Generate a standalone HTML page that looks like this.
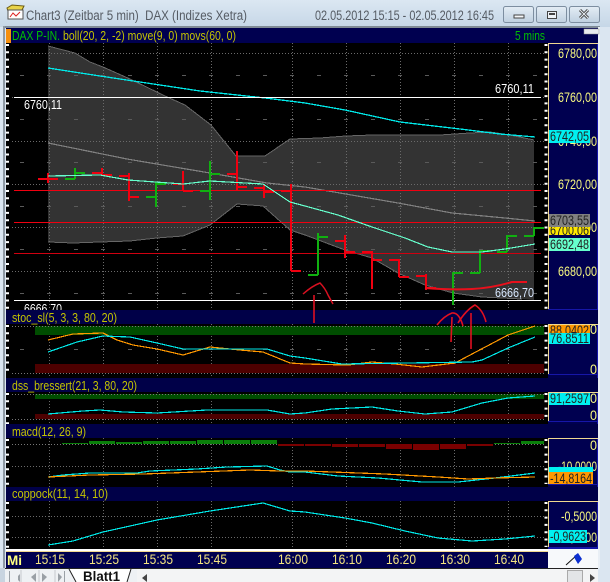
<!DOCTYPE html>
<html><head><meta charset="utf-8"><style>
html,body{margin:0;padding:0;background:#dbe6f1;overflow:hidden}
svg{display:block;position:absolute;left:0;top:0}
text{font-family:"Liberation Sans",sans-serif}
polyline{shape-rendering:crispEdges}
</style></head><body>
<svg xmlns="http://www.w3.org/2000/svg" width="610" height="582" viewBox="0 0 610 582">
<defs><linearGradient id="tb" x1="0" y1="0" x2="0" y2="1"><stop offset="0" stop-color="#dbe7f2"/><stop offset="1" stop-color="#c6d7e7"/></linearGradient>
<linearGradient id="btn" x1="0" y1="0" x2="0" y2="1"><stop offset="0" stop-color="#e4edf5"/><stop offset="1" stop-color="#bfd0e0"/></linearGradient></defs>
<rect width="610" height="582" fill="#dbe6f1"/>
<rect width="610" height="27" fill="url(#tb)"/>
<rect x="3" y="26" width="597" height="2" fill="#7f8b96"/>
<rect x="3" y="26" width="2" height="543" fill="#8f9aa5"/>
<rect x="598" y="27" width="2" height="541" fill="#e9eff5"/>
<!-- title icon -->
<g><path d="M7 8 L12 5 L24 6 L22 10 L8 11Z" fill="#e8d34a" stroke="#6a5a10" stroke-width="1"/><rect x="8" y="10" width="15" height="9" fill="#fff" stroke="#555"/><path d="M10 17 L13 13 L16 16 L20 12" fill="none" stroke="#d22" stroke-width="1"/></g>
<text x="26" y="20" font-size="13.5" fill="#555b63" textLength="221" lengthAdjust="spacingAndGlyphs" xml:space="preserve">Chart3 (Zeitbar 5 min)  DAX (Indizes Xetra)</text>
<text x="315" y="20" font-size="13.5" fill="#555b63" textLength="179" lengthAdjust="spacingAndGlyphs">02.05.2012 15:15 - 02.05.2012 16:45</text>
<!-- buttons -->
<g fill="url(#btn)" stroke="#7d8ea0"><rect x="503.500" y="6.500" width="30" height="16" rx="2"/><rect x="536.500" y="6.500" width="30" height="16" rx="2"/><rect x="569.500" y="6.500" width="30" height="16" rx="2"/></g>
<rect x="514" y="15" width="10" height="3" fill="#f4f6f8" stroke="#444"/>
<rect x="547.500" y="11.500" width="9" height="7" fill="#eef2f6" stroke="#444"/><rect x="549" y="13" width="6" height="2" fill="#444"/>
<path d="M580 10 L588 18 M588 10 L580 18" stroke="#444" stroke-width="3"/><path d="M580 10 L588 18 M588 10 L580 18" stroke="#e8eef4" stroke-width="1"/>
<!-- base black -->
<rect x="6" y="28" width="542" height="522" fill="#000"/>
<!-- right axis backgrounds -->
<rect x="548" y="28" width="50" height="522" fill="#000050"/>
<rect x="597" y="28" width="1" height="522" fill="#1616a8"/>
<!-- main chart -->
<rect x="548" y="43" width="1" height="267" fill="#f0d890"/><rect x="548" y="43" width="50" height="1" fill="#f0d890"/>
<polygon fill="#333" points="48,46 75,53 90,62 103,67 130,79 165,96 185,105 211,125 236,156 265,156 290,139 320,138 346,136 372,135 400,135 440,135 470,133 490,132 510,135 534,140 534,300 522,299 482,297 453,293 425,285 398,273 372,258 345,250 305,235 290,230 263,206 237,204 210,225 183,236 157,238 130,241 100,242 73,243 48,242"/>
<polyline fill="none" stroke="#666" points="48,46 75,53 90,62 103,67 130,79 165,96 185,105 211,125 236,156 265,156 290,139 320,138 346,136 372,135 400,135 440,135 470,133 490,132 510,135 534,140"/>
<polyline fill="none" stroke="#666" points="48,242 73,243 100,242 130,241 157,238 183,236 210,225 237,204 263,206 290,230 305,235 345,250 372,258 398,273 425,285 453,293 482,297 522,299"/>
<!-- grid -->
<g stroke="#6a6a6a" stroke-dasharray="1 2" fill="none">
<path d="M49.500 43V310M103.500 43V310M157.500 43V310M211.500 43V310M292.500 43V310M346.500 43V310M400.500 43V310M454.500 43V310M508.500 43V310"/>
<path d="M12 53.500H545M12 97.500H545M12 141.500H545M12 184.500H545M12 227.500H545M12 271.500H545"/>
<path d="M49.500 324V377M103.500 324V377M157.500 324V377M211.500 324V377M292.500 324V377M346.500 324V377M400.500 324V377M454.500 324V377M508.500 324V377"/>
<path d="M49.500 392V424M103.500 392V424M157.500 392V424M211.500 392V424M292.500 392V424M346.500 392V424M400.500 392V424M454.500 392V424M508.500 392V424"/>
<path d="M49.500 438V487M103.500 438V487M157.500 438V487M211.500 438V487M292.500 438V487M346.500 438V487M400.500 438V487M454.500 438V487M508.500 438V487"/>
<path d="M49.500 501V549M103.500 501V549M157.500 501V549M211.500 501V549M292.500 501V549M346.500 501V549M400.500 501V549M454.500 501V549M508.500 501V549"/>
<path d="M12 466.500H545M12 516.500H545M12 537.500H545"/>
</g>
<g stroke="#5a5a5a" stroke-dasharray="4 23" fill="none"><path d="M20 75.500H545M20 119.500H545M20 162.500H545M20 206.500H545M20 249.500H545M20 293.500H545M20 349.500H545"/></g>
<!-- indicator lines main -->
<polyline fill="none" stroke="#00e8e8" stroke-width="1.3" points="48,68 100,76 140,82 200,91 265,98 305,103 345,110 400,122 460,129 500,134 535,137"/>
<polyline fill="none" stroke="#808080" stroke-width="1.2" points="48,143 127,159 210,173 267,183 305,187 398,203 452,213 505,218 535,221"/>
<!-- white/red levels -->
<path d="M14 97.500H541M14 300.500H541" stroke="#fff" stroke-width="1"/>
<path d="M14 190.500H541M14 222.500H541" stroke="#f00010" stroke-width="1"/>
<path d="M14 253.500H541" stroke="#d00010" stroke-width="1"/>
<!-- bars -->
<g stroke="#f00010" stroke-width="2" fill="none">
<path d="M48 173V183M38 179H58"/>
<path d="M102 168V175M92 173H102M102 175H112"/>
<path d="M129 173V201M119 176H129M129 197H139"/>
<path d="M183 171V191M173 184H183M183 191H193"/>
<path d="M237 151V190M227 174H237M237 187H247"/>
<path d="M264 185V198M254 188H264M264 192H274"/>
<path d="M291 184V271M281 191H291M291 271H301"/>
<path d="M345 235V258M335 241H345M345 252H355"/>
<path d="M372 251V289M362 252H372M372 260H382"/>
<path d="M399 259V277M389 260H399M399 277H409"/>
<path d="M426 274V290M416 276H426M426 288H436"/>
</g>
<g stroke="#10b010" stroke-width="2" fill="none">
<path d="M75 168V179M65 179H75M75 173H85"/>
<path d="M156 182V207M146 197H156M156 184H166"/>
<path d="M210 161V200M200 191H210M210 174H220"/>
<path d="M318 233V275M308 275H318M318 237H328"/>
<path d="M453 272V305M453 273H463"/>
<path d="M480 250V273M470 273H480M480 251H490"/>
<path d="M507 235V252M497 252H507M507 236H517"/>
<path d="M534 227V236M524 236H534M534 228H544"/>
</g>
<polyline fill="none" stroke="#66ffcc" stroke-width="1.2" points="48,176 100,175 128,180 183,184 210,181 263,184 290,202 305,206 338,215 372,227 405,238 428,247 452,252 482,252 505,249 535,244"/>
<!-- hand drawing in chart -->
<path fill="none" stroke="#e8101c" stroke-width="2" d="M425 288 Q450 290 472 289 Q492 288 512 282 L527 282"/>
<path fill="none" stroke="#d81020" stroke-width="1.5" d="M303 294 Q312 286 320 283 Q325 288 328 295 L333 304"/>
<!-- text labels -->
<g font-size="13" fill="#fff">
<text x="24" y="109" textLength="38" lengthAdjust="spacingAndGlyphs">6760,11</text>
<text x="495" y="93" textLength="39" lengthAdjust="spacingAndGlyphs">6760,11</text>
<text x="495" y="297" fill="#d8e8ff" textLength="39" lengthAdjust="spacingAndGlyphs">6666,70</text>
<text x="24" y="313" textLength="38" lengthAdjust="spacingAndGlyphs">6666,70</text>
</g>
<!-- strips -->
<rect x="6" y="28" width="592" height="15" fill="#000050"/>
<rect x="6" y="29" width="5" height="14" fill="#f59010"/>
<rect x="584" y="29" width="15" height="5" fill="#e8ebee" stroke="#999" stroke-width="0.5"/>
<rect x="6" y="310" width="592" height="14" fill="#000048"/>
<rect x="6" y="378" width="592" height="14" fill="#000048"/>
<rect x="6" y="424" width="592" height="14" fill="#000048"/>
<rect x="6" y="487" width="592" height="14" fill="#000048"/>
<rect x="6" y="377" width="542" height="1" fill="#000"/>
<text x="12" y="40" font-size="13" fill="#00c000" textLength="48" lengthAdjust="spacingAndGlyphs">DAX P-IN.</text>
<text x="63" y="40" font-size="13" fill="#c4c400" textLength="173" lengthAdjust="spacingAndGlyphs">boll(20, 2, -2) move(9, 0) movs(60, 0)</text>
<text x="515" y="40" font-size="13" fill="#00c000" textLength="30" lengthAdjust="spacingAndGlyphs">5 mins</text>
<g font-size="13" fill="#c4c400">
<text x="12" y="322" textLength="105" lengthAdjust="spacingAndGlyphs">stoc_sl(5, 3, 3, 80, 20)</text>
<text x="12" y="390" textLength="125" lengthAdjust="spacingAndGlyphs">dss_bressert(21, 3, 80, 20)</text>
<text x="12" y="436" textLength="74" lengthAdjust="spacingAndGlyphs">macd(12, 26, 9)</text>
<text x="12" y="498" textLength="96" lengthAdjust="spacingAndGlyphs">coppock(11, 14, 10)</text>
</g>
<!-- stoc -->
<rect x="35" y="326" width="509" height="9" fill="#004d00"/>
<rect x="35" y="364" width="509" height="9" fill="#4d0000"/>
<path d="M12 326.500H545M12 373.500H545" stroke="#777" stroke-dasharray="1 2"/>
<polyline fill="none" stroke="#ff9800" stroke-width="1.2" points="48,340 73,334 103,333 117,340 133,345 157,349 183,355 210,347 240,350 263,352 290,363 305,364 348,365 372,362 395,364 422,367 455,363 508,335 535,326"/>
<polyline fill="none" stroke="#00e8e8" stroke-width="1.2" points="48,352 77,342 103,336 130,337 157,343 183,349 267,349 290,356 305,358 342,364 472,362 482,360 508,348 535,337"/>
<!-- dss -->
<rect x="35" y="394" width="509" height="5" fill="#004d00"/>
<rect x="35" y="414" width="509" height="5" fill="#4d0000"/>
<path d="M12 394.500H545M12 419.500H545" stroke="#777" stroke-dasharray="1 2"/>
<polyline fill="none" stroke="#00e8e8" stroke-width="1.2" points="48,414 83,411 100,410 123,412 157,413 207,410 267,410 290,414 305,413 332,409 372,407 398,411 425,414 452,412 482,403 508,398 535,396"/>
<!-- macd hist -->
<path d="M12 444.500H545" stroke="#777" stroke-dasharray="1 2"/>
<g fill="#0a7f0a"><rect x="62" y="443" width="26" height="1"/><rect x="89" y="441" width="26" height="3"/><rect x="116" y="442" width="26" height="2"/><rect x="143" y="441" width="26" height="3"/><rect x="170" y="441" width="26" height="3"/><rect x="197" y="440" width="26" height="4"/><rect x="224" y="440" width="26" height="4"/><rect x="251" y="440" width="26" height="4"/><rect x="494" y="443" width="26" height="1"/><rect x="521" y="441" width="23" height="3"/></g>
<g fill="#7a0000"><rect x="278" y="444" width="26" height="2"/><rect x="305" y="444" width="26" height="2"/><rect x="332" y="444" width="26" height="3"/><rect x="359" y="444" width="26" height="3"/><rect x="386" y="444" width="26" height="5"/><rect x="413" y="444" width="26" height="6"/><rect x="440" y="444" width="26" height="5"/><rect x="467" y="444" width="26" height="2"/></g>
<polyline fill="none" stroke="#00e8e8" stroke-width="1.2" points="48,477 63,475 90,473 137,473 150,471 197,469 227,467 267,466 280,470 290,472 305,472 338,476 378,478 422,482 458,482 495,478 535,473"/>
<polyline fill="none" stroke="#ff9800" stroke-width="1.2" points="48,477 90,475 143,474 197,472 250,470 280,471 305,471 332,472 385,474 438,477 468,479 495,478 535,477"/>
<!-- coppock -->
<polyline fill="none" stroke="#00e8e8" stroke-width="1.2" points="48,545 73,541 103,532 157,520 210,511 263,503 290,511 305,512 345,518 372,523 405,531 438,538 472,541 505,539 535,536"/>
<!-- hand drawings over indicators -->
<g fill="none" stroke="#e01020" stroke-width="1.6">
<path d="M314 295V323"/>
<path d="M437 325 Q444 316 452 313 Q459 312 463 326"/>
<path d="M458 323 Q466 310 475 305 Q483 310 486 322"/>
<path d="M452 317 L451 342"/>
<path d="M471 313 V349"/>
</g>
<!-- axis boxes lines -->
<g fill="#f0d890"><rect x="548" y="324" width="50" height="1"/><rect x="548" y="324" width="1" height="51"/><rect x="548" y="392" width="50" height="1"/><rect x="548" y="392" width="1" height="30"/><rect x="548" y="438" width="50" height="1"/><rect x="548" y="438" width="1" height="47"/><rect x="548" y="501" width="50" height="1"/><rect x="548" y="501" width="1" height="47"/></g>
<g fill="#1616a8"><rect x="548" y="374" width="50" height="1"/><rect x="548" y="421" width="50" height="1"/><rect x="548" y="484" width="50" height="1"/><rect x="548" y="547" width="50" height="2"/><rect x="548" y="309" width="50" height="1"/></g>
<!-- ticks -->
<g stroke="#fff" fill="none" stroke-width="3">
<path d="M7.500 44V310M7.500 325V376M7.500 393V424M7.500 439V486M7.500 502V549" stroke-dasharray="2 5.300"/>
<path d="M546 44V309M546 325V374M546 393V421M546 439V484M546 502V547" stroke-dasharray="2 5.300"/>
</g>
<!-- axis labels -->
<g font-size="14" fill="#f8f880">
<text x="558" y="58" textLength="39" lengthAdjust="spacingAndGlyphs">6780,00</text>
<text x="558" y="102" textLength="39" lengthAdjust="spacingAndGlyphs">6760,00</text>
<text x="558" y="146" textLength="39" lengthAdjust="spacingAndGlyphs">6740,00</text>
<text x="558" y="189" textLength="39" lengthAdjust="spacingAndGlyphs">6720,00</text>
<text x="558" y="232" textLength="39" lengthAdjust="spacingAndGlyphs">6700,00</text>
<text x="558" y="276" textLength="39" lengthAdjust="spacingAndGlyphs">6680,00</text>
<text x="590" y="334" textLength="7" lengthAdjust="spacingAndGlyphs">0</text>
<text x="590" y="374" textLength="7" lengthAdjust="spacingAndGlyphs">0</text>
<text x="590" y="403" textLength="7" lengthAdjust="spacingAndGlyphs">0</text>
<text x="590" y="420" textLength="7" lengthAdjust="spacingAndGlyphs">0</text>
<text x="590" y="450" textLength="7" lengthAdjust="spacingAndGlyphs">0</text>
<text x="558" y="471" textLength="39" lengthAdjust="spacingAndGlyphs">-10,0000</text>
<text x="561" y="521" textLength="36" lengthAdjust="spacingAndGlyphs">-0,5000</text>
<text x="561" y="542" textLength="36" lengthAdjust="spacingAndGlyphs">-1,0000</text>
</g>
<!-- tags -->
<g font-size="13.5" fill="#222">
<rect x="549" y="130" width="41" height="13" fill="#00f0f0"/><text x="550" y="141" textLength="39" lengthAdjust="spacingAndGlyphs">6742,05</text>
<rect x="549" y="226" width="41" height="9" fill="#ffe800"/><text x="550" y="235" textLength="39" lengthAdjust="spacingAndGlyphs">6700,06</text>
<rect x="549" y="214" width="41" height="13" fill="#808080"/><text x="550" y="225" textLength="39" lengthAdjust="spacingAndGlyphs">6703,55</text>
<rect x="549" y="238" width="41" height="13" fill="#66ffcc"/><text x="550" y="249" textLength="39" lengthAdjust="spacingAndGlyphs">6692,48</text>
<rect x="549" y="325" width="41" height="9" fill="#ff9800"/><text x="550" y="335" textLength="39" lengthAdjust="spacingAndGlyphs">88,0402</text>
<rect x="549" y="333" width="41" height="11" fill="#00f0f0"/><text x="550" y="343" textLength="39" lengthAdjust="spacingAndGlyphs">76,8511</text>
<rect x="549" y="393" width="41" height="12" fill="#00f0f0"/><text x="550" y="403" textLength="39" lengthAdjust="spacingAndGlyphs">91,2597</text>
<rect x="549" y="467" width="44" height="6" fill="#00f0f0"/>
<rect x="549" y="472" width="44" height="12" fill="#ff9800"/><text x="550" y="483" textLength="42" lengthAdjust="spacingAndGlyphs">-14,8164</text>
<rect x="549" y="530" width="38" height="13" fill="#00f0f0"/><text x="550" y="541" textLength="36" lengthAdjust="spacingAndGlyphs">-0,9623</text>
</g>
<!-- time axis -->
<rect x="6" y="549" width="542" height="2" fill="#fff"/>
<rect x="6" y="551" width="542" height="17" fill="#000050"/>
<rect x="6" y="551" width="542" height="1" fill="#f0d890"/>
<rect x="548" y="549" width="50" height="19" fill="#f7f9fb"/>
<path d="M566 565 L577 555" stroke="#111"/>
<path d="M574 556 L578 553 L582 559 L578 564 L575 559Z" fill="#0b2fd0"/>
<g font-size="14" fill="#f4e480">
<text x="7" y="565" font-weight="bold" font-size="14" fill="#ffff80" textLength="15" lengthAdjust="spacingAndGlyphs">Mi</text>
<text x="35" y="564" textLength="30" lengthAdjust="spacingAndGlyphs">15:15</text>
<text x="89" y="564" textLength="30" lengthAdjust="spacingAndGlyphs">15:25</text>
<text x="143" y="564" textLength="30" lengthAdjust="spacingAndGlyphs">15:35</text>
<text x="197" y="564" textLength="30" lengthAdjust="spacingAndGlyphs">15:45</text>
<text x="278" y="564" textLength="30" lengthAdjust="spacingAndGlyphs">16:00</text>
<text x="332" y="564" textLength="30" lengthAdjust="spacingAndGlyphs">16:10</text>
<text x="386" y="564" textLength="30" lengthAdjust="spacingAndGlyphs">16:20</text>
<text x="440" y="564" textLength="30" lengthAdjust="spacingAndGlyphs">16:30</text>
<text x="494" y="564" textLength="30" lengthAdjust="spacingAndGlyphs">16:40</text>
</g>
<!-- bottom bar -->
<rect x="0" y="568" width="610" height="14" fill="#eef1f4"/>
<rect x="0" y="568" width="5" height="14" fill="#c8d4e0"/>
<rect x="598" y="568" width="12" height="14" fill="#dbe6f1"/>
<rect x="5" y="568" width="593" height="1" fill="#222"/>
<rect x="137" y="569" width="461" height="13" fill="#f3f4f5"/>
<g fill="#9aa0a6"><path d="M9 571V582H10V571ZM18 576L20 574V582L18 580Z"/><path d="M31 577L36 573V582Z"/><path d="M42 573L47 577L42 582Z"/><path d="M58 573L62 577L58 582ZM64 571H65V582H64Z"/></g>
<path d="M21 570V582M39 570V582M55 570V582" stroke="#c5c9ce"/>
<polygon points="69,569 131,569 127,582 76,582" fill="#fff"/>
<path d="M69 569 L76 582 M131 569 L127 582" stroke="#222"/>
<text x="83" y="581" font-size="13.5" font-weight="bold" fill="#111" textLength="37" lengthAdjust="spacingAndGlyphs">Blatt1</text>
<path d="M147 574L142 578L147 582Z" fill="#444"/>
<rect x="567.500" y="570.500" width="15" height="12" fill="#e3e5e7" stroke="#aaa"/>
<path d="M590 574L595 578L590 582Z" fill="#444"/>
</svg>
</body></html>
